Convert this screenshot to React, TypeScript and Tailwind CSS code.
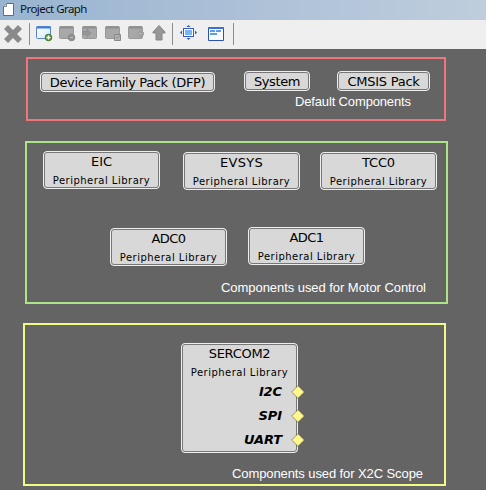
import React from "react";

type Pos = { box: string };

function Caption({ place, text, width }: { place: string; text: string; width: number }) {
  return (
    <svg className={`absolute h-[18px] overflow-visible ${place}`} width={width} height={18}>
      <text x={0} y={13} textLength={width} className="fill-white font-['Liberation_Sans',Arial,sans-serif] text-[13px]">
        {text}
      </text>
    </svg>
  );
}

function Label({ text, spacing }: { text: string; spacing: string }) {
  return <span className={`mt-px whitespace-nowrap text-[13px] leading-[16px] ${spacing}`}>{text}</span>;
}

function Subtitle() {
  return <span className="mt-[5px] whitespace-nowrap text-[10px] leading-[12px] tracking-[0.49px]">Peripheral Library</span>;
}

function Node({ box, children }: Pos & { children: React.ReactNode }) {
  return (
    <div className={`absolute rounded-[4px] border border-[#eeeeee] bg-[#d8d8d8] ${box}`}>
      <div className="flex h-full w-full flex-col items-center rounded-[3px] border border-[#777777] font-['DejaVu_Sans',Verdana,sans-serif] text-black">
        {children}
      </div>
    </div>
  );
}

function Library({ box, name, spacing }: Pos & { name: string; spacing: string }) {
  return (
    <Node box={box}>
      <Label text={name} spacing={spacing} />
      <Subtitle />
    </Node>
  );
}

function Port({ name }: { name: string }) {
  return (
    <div className="relative flex h-6 w-full items-center justify-end pr-[14px]">
      <span className="text-[13px] leading-[16px] font-bold italic tracking-[-0.1px]">{name}</span>
      <svg className="absolute top-[5px] -right-[9px]" width="14" height="14" viewBox="0 0 14 14">
        <path d="M7 .7 13.3 7 7 13.3.7 7Z" fill="#fff78b" stroke="#77724f" strokeWidth=".7" />
      </svg>
    </div>
  );
}

const Separator = ({ gap }: { gap: string }) => <div className={`h-[22px] w-px bg-[#8c8c8c] ${gap}`} />;

function Toolbar() {
  return (
    <div className="flex h-[29px] items-start bg-[#efefef] pt-[3px]">
      <svg className="ml-[3px] mt-[1px]" width="20" height="20" viewBox="0 0 20 20">
        <path d="M1 5 5 1 10 6 15 1 19 5 14 10 19 15 15 19 10 14 5 19 1 15 6 10Z" fill="#8a8a8a" />
      </svg>
      <Separator gap="ml-[6px]" />
      <svg className="ml-[6px]" width="18" height="19" viewBox="0 0 18 19">
        <defs><linearGradient id="pane" x1="0" y1="0" x2="1" y2="1"><stop stopColor="#fff" /><stop offset="1" stopColor="#d2e8f8" /></linearGradient></defs>
        <rect x=".5" y="3.5" width="14" height="12" rx="1" fill="url(#pane)" stroke="#5b86c9" />
        <path d="M.5 4.5h14.500" stroke="#3f7ddb" strokeWidth="2" />
        <circle cx="12.500" cy="14.500" r="3.3" fill="#5f9b3a" stroke="#3d7d2b" />
        <path d="M10.500 14.500h4M12.500 12.500v4" stroke="#fff" strokeWidth="1.300" />
      </svg>
      <svg className="ml-[5px]" width="18" height="19" viewBox="0 0 18 19">
        <rect x=".5" y="3.5" width="14" height="12" rx="1" fill="#a8a8a8" stroke="#999" /><path d="M1 4.500h13" stroke="#8e8e8e" strokeWidth="2" />
        <circle cx="12.500" cy="14.500" r="3.300" fill="#929292" stroke="#8a8a8a" /><path d="M11 14.500h3" stroke="#bbb" />
      </svg>
      <svg className="ml-[5px]" width="18" height="19" viewBox="0 0 18 19">
        <rect x=".5" y="3.5" width="14" height="12" rx="1" fill="#a8a8a8" stroke="#999" /><path d="M1 4.500h13" stroke="#8e8e8e" strokeWidth="2" />
        <path d="M1 8.500h4V6l4 4-4 4v-2.500H1Z" fill="#969696" stroke="#888" strokeWidth=".6" />
      </svg>
      <svg className="ml-[5px]" width="18" height="19" viewBox="0 0 18 19">
        <rect x=".5" y="3.5" width="14" height="12" rx="1" fill="#a8a8a8" stroke="#999" /><path d="M1 4.500h13" stroke="#8e8e8e" strokeWidth="2" />
        <path d="M9.5 11.5h6v6h-6z" fill="#b4b4b4" stroke="#888" /><path d="m11 14 1.500 1.500 2-3" fill="none" stroke="#888" />
      </svg>
      <svg className="ml-[5px]" width="18" height="19" viewBox="0 0 18 19">
        <rect x=".5" y="3.5" width="14" height="12" rx="1" fill="#a8a8a8" stroke="#999" /><path d="M1 4.500h13" stroke="#8e8e8e" strokeWidth="2" />
        <path d="M13 7.500 9.500 10.500l3.500 3.500v-2h2.500V9.500H13Z" fill="#b0b0b0" stroke="#8b8b8b" strokeWidth=".7" />
      </svg>
      <svg className="ml-[6px]" width="14" height="19" viewBox="0 0 14 19">
        <path d="M7 2.5 13 9v1h-3v7H4v-7H1V9Z" fill="#979797" stroke="#858585" />
      </svg>
      <Separator gap="ml-[6px]" />
      <svg className="ml-[7px]" width="17" height="19" viewBox="0 0 17 19">
        <rect x="3.5" y="5.5" width="10" height="8" fill="#fff" stroke="#3459c7" /><path d="M5 7h7v5H5z" fill="#75b5f0" />
        <path d="M8.500 2 10.500 4H6.500ZM8.500 17 6.500 15h4ZM0 9.500 2 7.500v4ZM17 9.500 15 7.500v4Z" fill="#3459b7" />
      </svg>
      <svg className="ml-[11px]" width="17" height="19" viewBox="0 0 17 19">
        <path d="M.500 4.500h15v13H.500Z" fill="#f7fbff" stroke="#2b50b6" /><path d="M0 5h16" stroke="#3f70d8" strokeWidth="2" />
        <path d="M2 8h5M8 8h5M2 11h7" stroke="#5a9eec" strokeWidth="2" />
      </svg>
      <Separator gap="ml-[8px]" />
    </div>
  );
}

export default function App() {
  return (
    <main className="flex h-[490px] w-[486px] flex-col overflow-hidden bg-[#646464]">
      <header className="flex h-5 items-center bg-linear-to-r from-[#99b4d1] to-[#bfcddd] pl-[3px]">
        <svg width="11" height="14" viewBox="0 0 11 14">
          <path d="M3.5.5h7v12H.5v-9Z" fill="#fff" stroke="#6b6b6b" /><path d="M3.5.5v3h-3" fill="#ddd" stroke="#888" />
        </svg>
        <h1 className="ml-[6px] mb-[2px] text-[11.5px] leading-[16px] font-normal tracking-[-0.55px] text-[#111] font-['Noto_Sans',Tahoma,sans-serif]">Project Graph</h1>
      </header>
      <Toolbar />
      <section className="relative flex-1">
        <div className="absolute top-[8px] left-[26px] h-[64px] w-[420px] border-2 border-[#f0747b]" />
        <div className="absolute top-[92px] left-[25px] h-[163px] w-[423px] border-2 border-[#ade485]" />
        <div className="absolute top-[274px] left-[23px] h-[163px] w-[423px] border-2 border-[#f1fa86]" />
        <Node box="left-[40px] top-[23px] h-[20px] w-[175px]"><Label text="Device Family Pack (DFP)" spacing="tracking-[-0.36px]" /></Node>
        <Node box="left-[244px] top-[22px] h-[20px] w-[66px]"><Label text="System" spacing="tracking-[-0.4px]" /></Node>
        <Node box="left-[337px] top-[22px] h-[20px] w-[93px]"><Label text="CMSIS Pack" spacing="tracking-[-0.25px]" /></Node>
        <Library box="left-[43px] top-[102px] h-[38px] w-[117px]" name="EIC" spacing="tracking-normal" />
        <Library box="left-[183px] top-[103px] h-[38px] w-[117px]" name="EVSYS" spacing="tracking-[0.3px]" />
        <Library box="left-[320px] top-[103px] h-[38px] w-[117px]" name="TCC0" spacing="tracking-[-0.2px]" />
        <Library box="left-[110px] top-[179px] h-[38px] w-[117px]" name="ADC0" spacing="tracking-[-0.6px]" />
        <Library box="left-[248px] top-[178px] h-[38px] w-[117px]" name="ADC1" spacing="tracking-[-0.6px]" />
        <Node box="left-[181px] top-[294px] h-[110px] w-[117px]">
          <Label text="SERCOM2" spacing="tracking-[-0.3px]" />
          <Subtitle />
          <div className="mt-px w-full">
            <Port name="I2C" />
            <Port name="SPI" />
            <Port name="UART" />
          </div>
        </Node>
        <Caption place="left-[295px] top-[44px]" text="Default Components" width={116} />
        <Caption place="left-[221px] top-[230px]" text="Components used for Motor Control" width={205} />
        <Caption place="left-[232px] top-[416px]" text="Components used for X2C Scope" width={191} />
      </section>
    </main>
  );
}
